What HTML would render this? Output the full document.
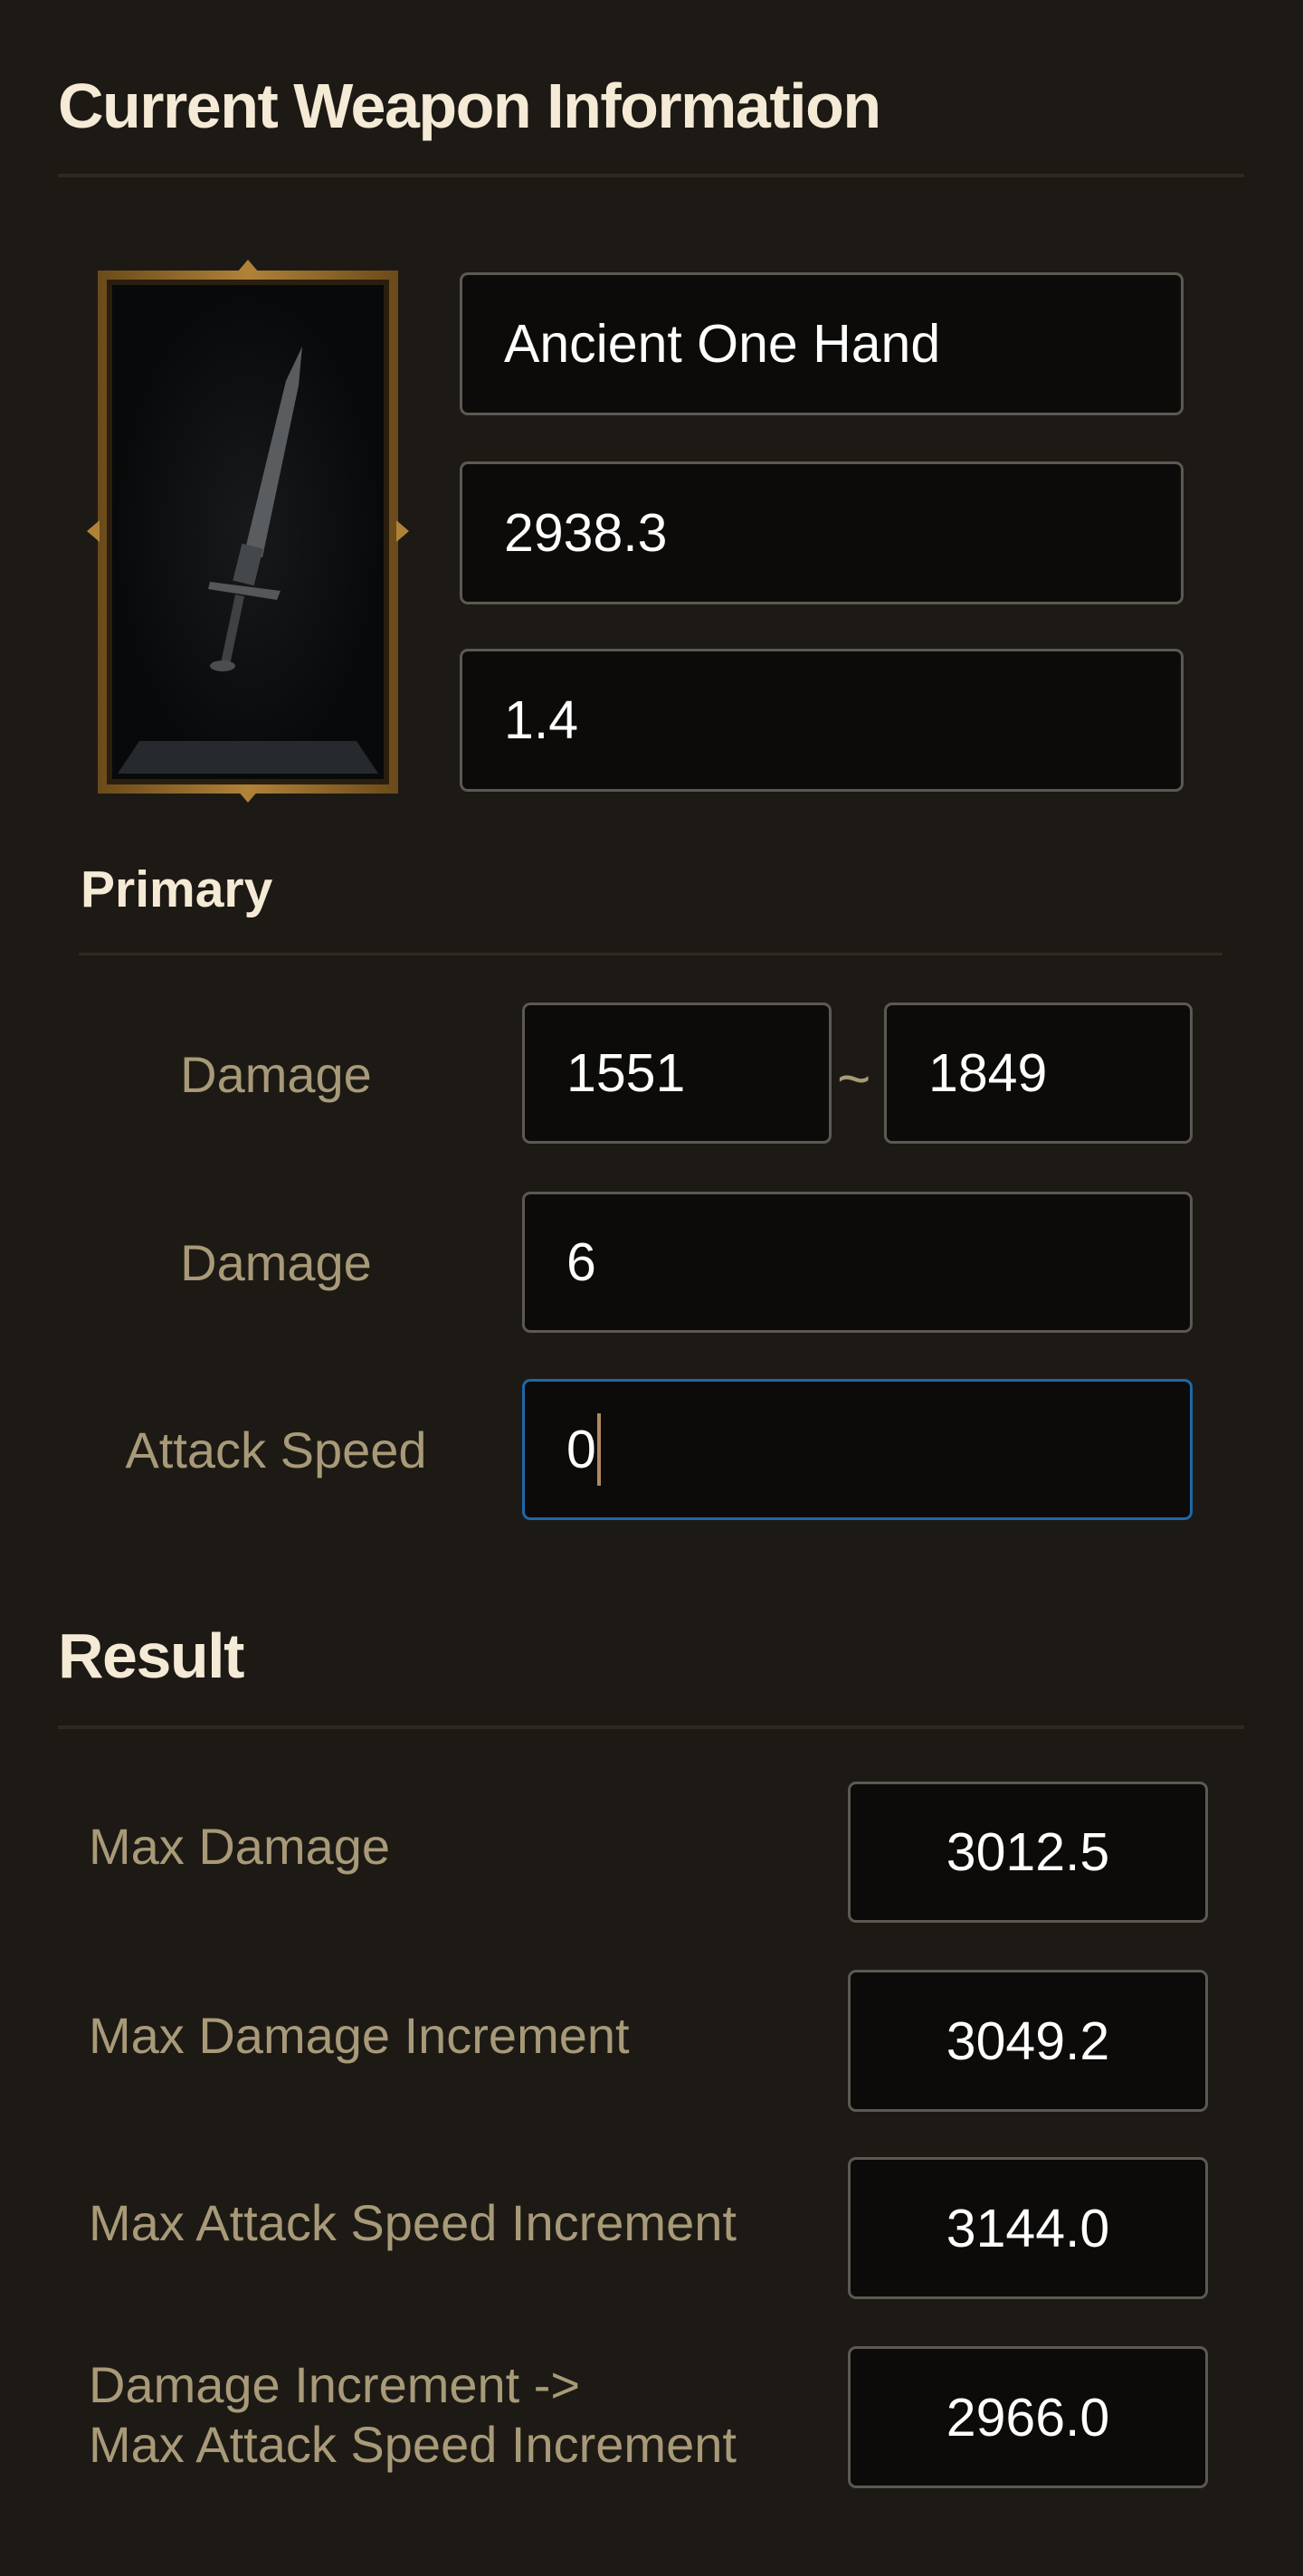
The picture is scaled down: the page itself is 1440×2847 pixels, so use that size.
<!DOCTYPE html>
<html><head><meta charset="utf-8"><style>
*{margin:0;padding:0;box-sizing:border-box}
body{width:1440px;height:2847px;background:#1d1a15;font-family:"Liberation Sans",sans-serif;position:relative;overflow:hidden}
.a{position:absolute}
.h{color:#f5ead6;font-weight:bold;font-size:70px;letter-spacing:-1.5px}
.line{position:absolute;background:#2f2a1f;height:4px}
.in{position:absolute;background:#0c0b09;border:3px solid #5c5852;border-radius:9px;color:#fff;font-size:59px;display:flex;align-items:center;padding-left:46px}
.c{justify-content:center;padding-left:0}
.lb{position:absolute;color:#a89a78;font-size:56px;line-height:60px}
</style></head><body>
<div class="a h" style="left:64px;top:72px;line-height:90px">Current Weapon Information</div>
<div class="line" style="left:64px;width:1311px;top:192px"></div>

<svg class="a" style="left:94px;top:281px" width="360" height="612" viewBox="0 0 360 612">
<defs><linearGradient id="g" x1="0" x2="1"><stop offset="0" stop-color="#6a4a1a"/><stop offset=".5" stop-color="#b08238"/><stop offset="1" stop-color="#6a4a1a"/></linearGradient>
<radialGradient id="bg"><stop offset="0" stop-color="#17191b"/><stop offset="1" stop-color="#08090a"/></radialGradient></defs>
<rect x="14" y="18" width="332" height="578" fill="url(#g)"/>
<rect x="24" y="28" width="312" height="558" fill="#2a1e0e"/>
<rect x="30" y="34" width="300" height="546" fill="url(#bg)"/>
<polygon points="36,574 324,574 300,538 60,538" fill="#262a2e"/>
<polygon points="180,6 192,20 168,20" fill="#b08238"/>
<polygon points="180,606 192,592 168,592" fill="#b08238"/>
<polygon points="2,306 16,294 16,318" fill="#b08238"/>
<polygon points="358,306 344,294 344,318" fill="#b08238"/>
<path d="M240 102 L222 140 L176 330 L196 335 L236 145 Z" fill="#5a5d60"/>
<rect x="168" y="322" width="24" height="42" fill="#45484b" transform="rotate(14 180 343)"/>
<path d="M138 362 L216 372 L212 382 L136 370Z" fill="#55585a"/>
<path d="M166 376 L150 452 L160 454 L176 378Z" fill="#3f4244"/>
<ellipse cx="152" cy="455" rx="14" ry="6" fill="#4b4e50"/>
</svg>

<div class="in" style="left:508px;top:301px;width:800px;height:158px">Ancient One Hand</div>
<div class="in" style="left:508px;top:510px;width:800px;height:158px">2938.3</div>
<div class="in" style="left:508px;top:717px;width:800px;height:158px">1.4</div>

<div class="a" style="left:89px;top:950px;color:#f5ead6;font-weight:bold;font-size:57px;line-height:66px">Primary</div>
<div class="line" style="left:87px;width:1264px;top:1053px;height:3px"></div>

<div class="lb" style="left:140px;width:330px;text-align:center;top:1158px">Damage</div>
<div class="in" style="left:577px;top:1108px;width:342px;height:156px">1551</div>
<div class="a" style="left:925px;top:1162px;color:#a89a78;font-size:64px;line-height:60px">~</div>
<div class="in" style="left:977px;top:1108px;width:341px;height:156px">1849</div>

<div class="lb" style="left:140px;width:330px;text-align:center;top:1366px">Damage</div>
<div class="in" style="left:577px;top:1317px;width:741px;height:156px">6</div>

<div class="lb" style="left:100px;width:410px;text-align:center;top:1573px">Attack Speed</div>
<div class="in" style="left:577px;top:1524px;width:741px;height:156px;border-color:#1f67a8">0<span style="display:inline-block;width:4px;height:80px;background:#b08860;margin-left:1px"></span></div>

<div class="a h" style="left:64px;top:1785px;line-height:90px">Result</div>
<div class="line" style="left:64px;width:1311px;top:1907px"></div>

<div class="lb" style="left:98px;top:2011px">Max Damage</div>
<div class="in c" style="left:937px;top:1969px;width:398px;height:156px">3012.5</div>
<div class="lb" style="left:98px;top:2220px">Max Damage Increment</div>
<div class="in c" style="left:937px;top:2177px;width:398px;height:157px">3049.2</div>
<div class="lb" style="left:98px;top:2427px">Max Attack Speed Increment</div>
<div class="in c" style="left:937px;top:2384px;width:398px;height:157px">3144.0</div>
<div class="lb" style="left:98px;top:2603px;line-height:66px">Damage Increment -&gt;<br>Max Attack Speed Increment</div>
<div class="in c" style="left:937px;top:2593px;width:398px;height:157px">2966.0</div>
</body></html>
